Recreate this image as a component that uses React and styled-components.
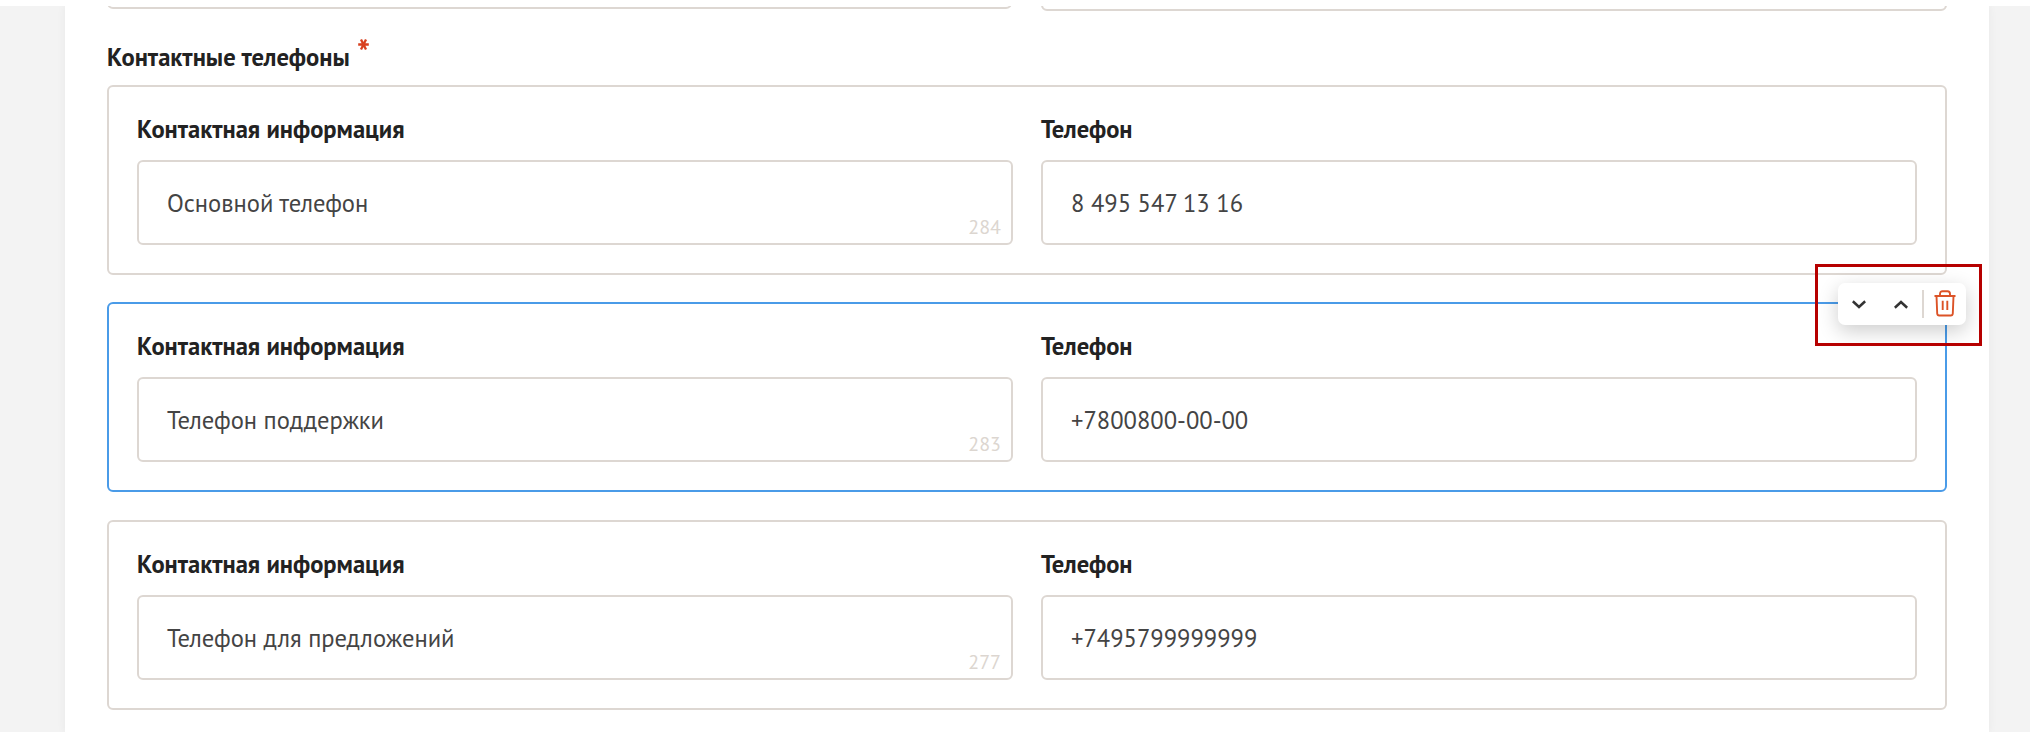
import React from "react";
import styled, { createGlobalStyle } from "styled-components";

const GlobalStyle = createGlobalStyle`
  *, *::before, *::after { box-sizing: border-box; }
  body { margin: 0; background: #fff; overflow: hidden; }
`;

const line = "#ddd7d2";

const Page = styled.div`
  height: 732px;
  padding-top: 6px;
  overflow: hidden;
  background: #fff;
  font-family: "PT Sans", "Open Sans", "Noto Sans", sans-serif;
`;

const Backdrop = styled.div`
  height: 726px;
  padding: 0 41px 0 65px;
  background: #f3f3f3;
`;

const Sheet = styled.main`
  height: 726px;
  padding: 0 42px;
  overflow: hidden;
  background: #fff;
  box-shadow: 0 0 9px rgba(0, 0, 0, 0.05);
  clip-path: inset(0 -12px);
`;

const PreviousRow = styled.div`
  display: flex;
  justify-content: space-between;
  height: 24px;
`;

const PreviousField = styled.div`
  width: ${(p) => p.$width}px;
  height: ${(p) => p.$visible + 20}px;
  margin-top: -20px;
  border: 2px solid ${line};
  border-radius: 6px;
`;

const SectionTitle = styled.h2`
  display: flex;
  height: 55px;
  margin: 0;
  padding-top: 10px;
  font-size: 24.6px;
  font-weight: 700;
  line-height: 34px;
  color: #222;
`;

const Required = styled.svg`
  display: block;
  width: 11px;
  height: 11px;
  margin: -1px 0 0 8px;
`;

const Groups = styled.div`
  display: flex;
  flex-direction: column;
`;

const Group = styled.section`
  position: relative;
  display: grid;
  grid-template-columns: 1fr 1fr;
  column-gap: 28px;
  height: ${(p) => p.$height}px;
  margin-bottom: ${(p) => p.$gap}px;
  padding: 25px 28px 28px;
  border: 2px solid ${(p) => (p.$active ? "#4a9be8" : line)};
  border-radius: 6px;
`;

const Field = styled.div`
  display: flex;
  flex-direction: column;
  min-width: 0;
`;

const Label = styled.div`
  height: 48px;
  font-size: 24.55px;
  font-weight: 700;
  line-height: 34px;
  color: #222;
`;

const Input = styled.div`
  display: flex;
  justify-content: space-between;
  height: 85px;
  padding: 24px 10px 0 28px;
  border: 2px solid ${line};
  border-radius: 6px;
  font-size: 24.55px;
  line-height: 34px;
  white-space: nowrap;
  color: #444;
`;

const Counter = styled.span`
  padding-top: 27px;
  font-size: 20px;
  line-height: 28px;
  color: #dcd6d0;
`;

const Toolbar = styled.div`
  position: absolute;
  z-index: 2;
  top: -21px;
  right: -21px;
  display: flex;
  align-items: center;
  width: 128px;
  height: 42px;
  padding-left: 14px;
  border-radius: 7px;
  background: #fff;
  box-shadow: 0 6px 20px rgba(0, 0, 0, 0.2);
`;

const Highlight = styled.div`
  position: absolute;
  z-index: 3;
  top: -40px;
  right: -37px;
  width: 167px;
  height: 82px;
  border: 3px solid #b60000;
`;

const Chevron = styled.svg`
  width: 14px;
  height: 9px;
  margin-right: ${(p) => p.$after}px;
`;

const Divider = styled.div`
  width: 2px;
  height: 28px;
  margin-right: 10px;
  background: ${line};
`;

const Trash = styled.svg`
  width: 22px;
  height: 27px;
  margin-top: -1px;
`;

const groups = [
  { info: "Основной телефон", left: 284, phone: "8 495 547 13 16", height: 190, gap: 27 },
  { info: "Телефон поддержки", left: 283, phone: "+7800800-00-00", height: 190, gap: 28, active: true },
  { info: "Телефон для предложений", left: 277, phone: "+7495799999999", height: 190, gap: 0 },
];

function GroupTools() {
  return (
    <>
      <Toolbar>
        <Chevron $after={28} viewBox="0 0 14 9" fill="none">
          <path d="M.8 1.300 7 7l6.200-5.700" stroke="#333" strokeWidth="2.6" />
        </Chevron>
        <Chevron $after={14} viewBox="0 0 14 9" fill="none">
          <path d="M.8 7.700 7 2l6.200 5.700" stroke="#333" strokeWidth="2.6" />
        </Chevron>
        <Divider />
        <Trash viewBox="0 0 22 27" fill="none" stroke="#dc5327" strokeWidth="1.9">
          <path d="M.5 6h21M2.500 6l.7 17.500c.1 1.300.8 2 2 2h11.600c1.200 0 1.900-.7 2-2L19.500 6M6 5.500V4C6 2.300 7 1.200 8.500 1.200h5C15 1.200 16 2.300 16 4v1.500M8.700 10.800v9.200M13.300 10.800v9.200" />
        </Trash>
      </Toolbar>
      <Highlight />
    </>
  );
}

export default function App() {
  return (
    <Page>
      <GlobalStyle />
      <Backdrop>
        <Sheet>
          <PreviousRow>
            <PreviousField $width={905} $visible={3} />
            <PreviousField $width={906} $visible={5} />
          </PreviousRow>
          <SectionTitle>
            Контактные телефоны
            <Required viewBox="0 0 11 11" stroke="#d8401f" strokeWidth="2.3">
              <path d="M3 .5 8 10.500M8 .5 3 10.500M.2 5.500h10.600" />
            </Required>
          </SectionTitle>
          <Groups>
            {groups.map((g) => (
              <Group key={g.left} $height={g.height} $gap={g.gap} $active={g.active}>
                <Field>
                  <Label>Контактная информация</Label>
                  <Input>
                    <span>{g.info}</span>
                    <Counter>{g.left}</Counter>
                  </Input>
                </Field>
                <Field>
                  <Label>Телефон</Label>
                  <Input>
                    <span>{g.phone}</span>
                  </Input>
                </Field>
                {g.active && <GroupTools />}
              </Group>
            ))}
          </Groups>
        </Sheet>
      </Backdrop>
    </Page>
  );
}
